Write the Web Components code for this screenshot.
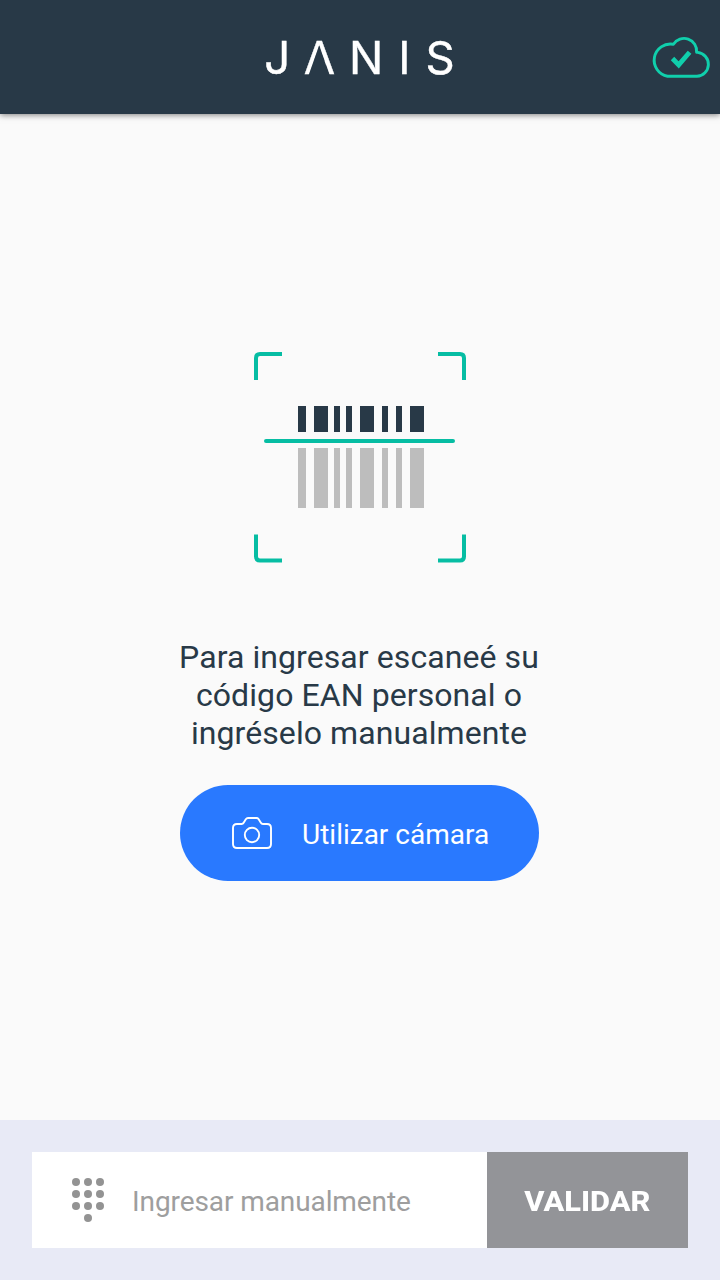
<!DOCTYPE html>
<html lang="es">
<head>
<meta charset="utf-8">
<meta name="viewport" content="width=device-width, initial-scale=1">
<title>Janis</title>
<style>
    :root {
        --dark: #283947;
        --green: #06bda3;
        --blue: #2979ff;
        --grey: #939498;
    }

    body {
        margin: 0;
        font-family: Roboto, "Liberation Sans", sans-serif;
        color: var(--dark);
        background: #fafafa;
    }
</style>
</head>
<body>

<template id="app-header-template">
    <style>
        :host {
            display: grid;
            grid-template-columns: 1fr auto 1fr;
            align-items: center;
            height: 114px;
            box-sizing: border-box;
            padding: 0 9px;
            background: var(--dark);
            box-shadow: 0 1px 6px rgba(0, 0, 0, 0.5);
            z-index: 1;
        }

        svg {
            display: block;
        }

        .logo {
            grid-column: 2;
        }

        .logo text {
            font: 400 45.5px Inter, sans-serif;
            fill: #fff;
            stroke: #fff;
            stroke-width: 0.4;
        }

        .status {
            justify-self: end;
        }
    </style>
    <svg class="logo" width="192" height="60" viewBox="0 0 192 60">
        <mask id="no-bar">
            <rect width="192" height="60" fill="#fff"/>
            <path d="M55.100 18.500L44.700 48h20.800z" fill="#000"/>
        </mask>
        <text x="0.3 39.8 85 134.200 161.500" y="46.500" mask="url(#no-bar)">JANIS</text>
    </svg>
    <slot class="status"></slot>
</template>

<template id="cloud-status-template">
    <style>
        :host {
            display: block;
            justify-self: end;
        }

        svg {
            display: block;
        }
    </style>
    <svg width="60" height="44" viewBox="0 0 60 44" fill="none" stroke="#10cfac">
        <path d="M16.500 41.300h29.500a12 12 0 0 0 0.800-23.900l-1.200-0.100A12.600 12.600 0 0 0 22.400 9.300A16.100 16.100 0 1 0 16.500 41.300z" stroke-width="2.900" stroke-linejoin="round"/>
        <path d="M21.500 23.500l6.200 6.400L38.600 17.200" stroke-width="4.800"/>
    </svg>
</template>

<template id="scan-frame-template">
    <style>
        :host {
            display: block;
        }

        svg {
            display: block;
        }

        .corners {
            fill: none;
            stroke: var(--green);
            stroke-width: 4;
        }

        .beam {
            fill: var(--green);
        }
    </style>
    <svg width="212" height="212" viewBox="0 0 212 212">
        <path class="corners" d="M2 28V6q0-4 4-4h22M184 2h22q4 0 4 4v22M2 182.500v22q0 4 4 4h22M184 208.500h22q4 0 4-4v-22"/>
        <path d="M44 54h8v26h-8zM60 54h14v26H60zM80 54h6v26h-6zM92 54h6v26h-6zM106 54h14v26h-14zM128 54h6v26h-6zM142 54h6v26h-6zM156 54h14v26h-14z" fill="#283947"/>
        <rect class="beam" x="10" y="87" width="191" height="4" rx="2"/>
        <path d="M44 96h8v60h-8zM60 96h14v60H60zM80 96h6v60h-6zM92 96h6v60h-6zM106 96h14v60h-14zM128 96h6v60h-6zM142 96h6v60h-6zM156 96h14v60h-14z" fill="#bdbdbd"/>
    </svg>
</template>

<template id="camera-button-template">
    <style>
        :host {
            display: block;
        }

        button {
            display: flex;
            align-items: center;
            gap: 29px;
            width: 359px;
            height: 96px;
            padding: 2px 0 0 51px;
            border: 0;
            border-radius: 48px;
            color: #fff;
            background: var(--blue);
            font: 28px Roboto, sans-serif;
        }

        svg {
            flex: none;
            margin-top: -3px;
        }
    </style>
    <button type="button">
        <svg width="42" height="34" viewBox="0 0 42 34" fill="none" stroke="#fff" stroke-width="1.9">
            <path d="M6 8h4.500q1.500 0 2.300-1.500l2-3.200Q15.700 2 17 2h8.500q1.300 0 2 1l2.200 3.500Q30.500 8 32 8h4q4 0 4 4V28q0 4-4 4H6q-4 0-4-4V12q0-4 4-4z"/>
            <circle cx="21" cy="19" r="7.200"/>
        </svg>
        <span><slot></slot></span>
    </button>
</template>

<template id="manual-entry-template">
    <style>
        :host {
            display: flex;
            height: 160px;
            box-sizing: border-box;
            padding: 32px;
            background: #e8eaf6;
        }

        .field {
            display: flex;
            flex: 1;
            align-items: center;
            gap: 28px;
            padding-left: 40px;
            background: #fff;
            color: #9e9e9e;
            font-size: 28px;
            letter-spacing: -0.09px;
        }

        .field span {
            padding-top: 3px;
        }

        button {
            width: 201px;
            border: 0;
            padding: 2px 1px 0 0;
            color: #fff;
            background: var(--grey);
            font: 800 28px Roboto, sans-serif;
        }

        button span {
            display: inline-block;
            transform: scaleX(1.1);
        }
    </style>
    <div class="field">
        <svg width="32" height="44" viewBox="0 0 32 44" fill="#939393">
            <circle cx="4" cy="4" r="4"/><circle cx="16" cy="4" r="4"/><circle cx="28" cy="4" r="4"/>
            <circle cx="4" cy="16" r="4"/><circle cx="16" cy="16" r="4"/><circle cx="28" cy="16" r="4"/>
            <circle cx="4" cy="28" r="4"/><circle cx="16" cy="28" r="4"/><circle cx="28" cy="28" r="4"/>
            <circle cx="16" cy="40" r="4"/>
        </svg>
        <span><slot></slot></span>
    </div>
    <button type="button"><span><slot name="action"></slot></span></button>
</template>

<template id="login-screen-template">
    <style>
        :host {
            display: flex;
            flex-direction: column;
            height: 1280px;
        }

        main {
            display: flex;
            flex: 1;
            flex-direction: column;
            align-items: center;
            padding-top: 238px;
            box-sizing: border-box;
        }

        p {
            width: 380px;
            margin: 74px 2px 33px 0;
            font-size: 32px;
            line-height: 38px;
            letter-spacing: 0.08px;
            text-align: center;
        }

        camera-button {
            margin-right: 1px;
        }
    </style>
    <app-header><cloud-status></cloud-status></app-header>
    <main>
        <scan-frame></scan-frame>
        <p><slot></slot></p>
        <camera-button>Utilizar cámara</camera-button>
    </main>
    <manual-entry>Ingresar manualmente<span slot="action">VALIDAR</span></manual-entry>
</template>

<login-screen>Para ingresar escaneé su código EAN personal o ingréselo manualmente</login-screen>

<script>
    class TemplateElement extends HTMLElement {
        constructor() {
            super();
            const template = document.getElementById(`${this.localName}-template`).content;
            this.attachShadow({ mode: 'open' }).appendChild(document.importNode(template, true));
        }
    }

    class AppHeader extends TemplateElement {}
    class CloudStatus extends TemplateElement {}
    class ScanFrame extends TemplateElement {}
    class CameraButton extends TemplateElement {}
    class ManualEntry extends TemplateElement {}
    class LoginScreen extends TemplateElement {}

    customElements.define('app-header', AppHeader);
    customElements.define('cloud-status', CloudStatus);
    customElements.define('scan-frame', ScanFrame);
    customElements.define('camera-button', CameraButton);
    customElements.define('manual-entry', ManualEntry);
    customElements.define('login-screen', LoginScreen);
</script>
</body>
</html>
